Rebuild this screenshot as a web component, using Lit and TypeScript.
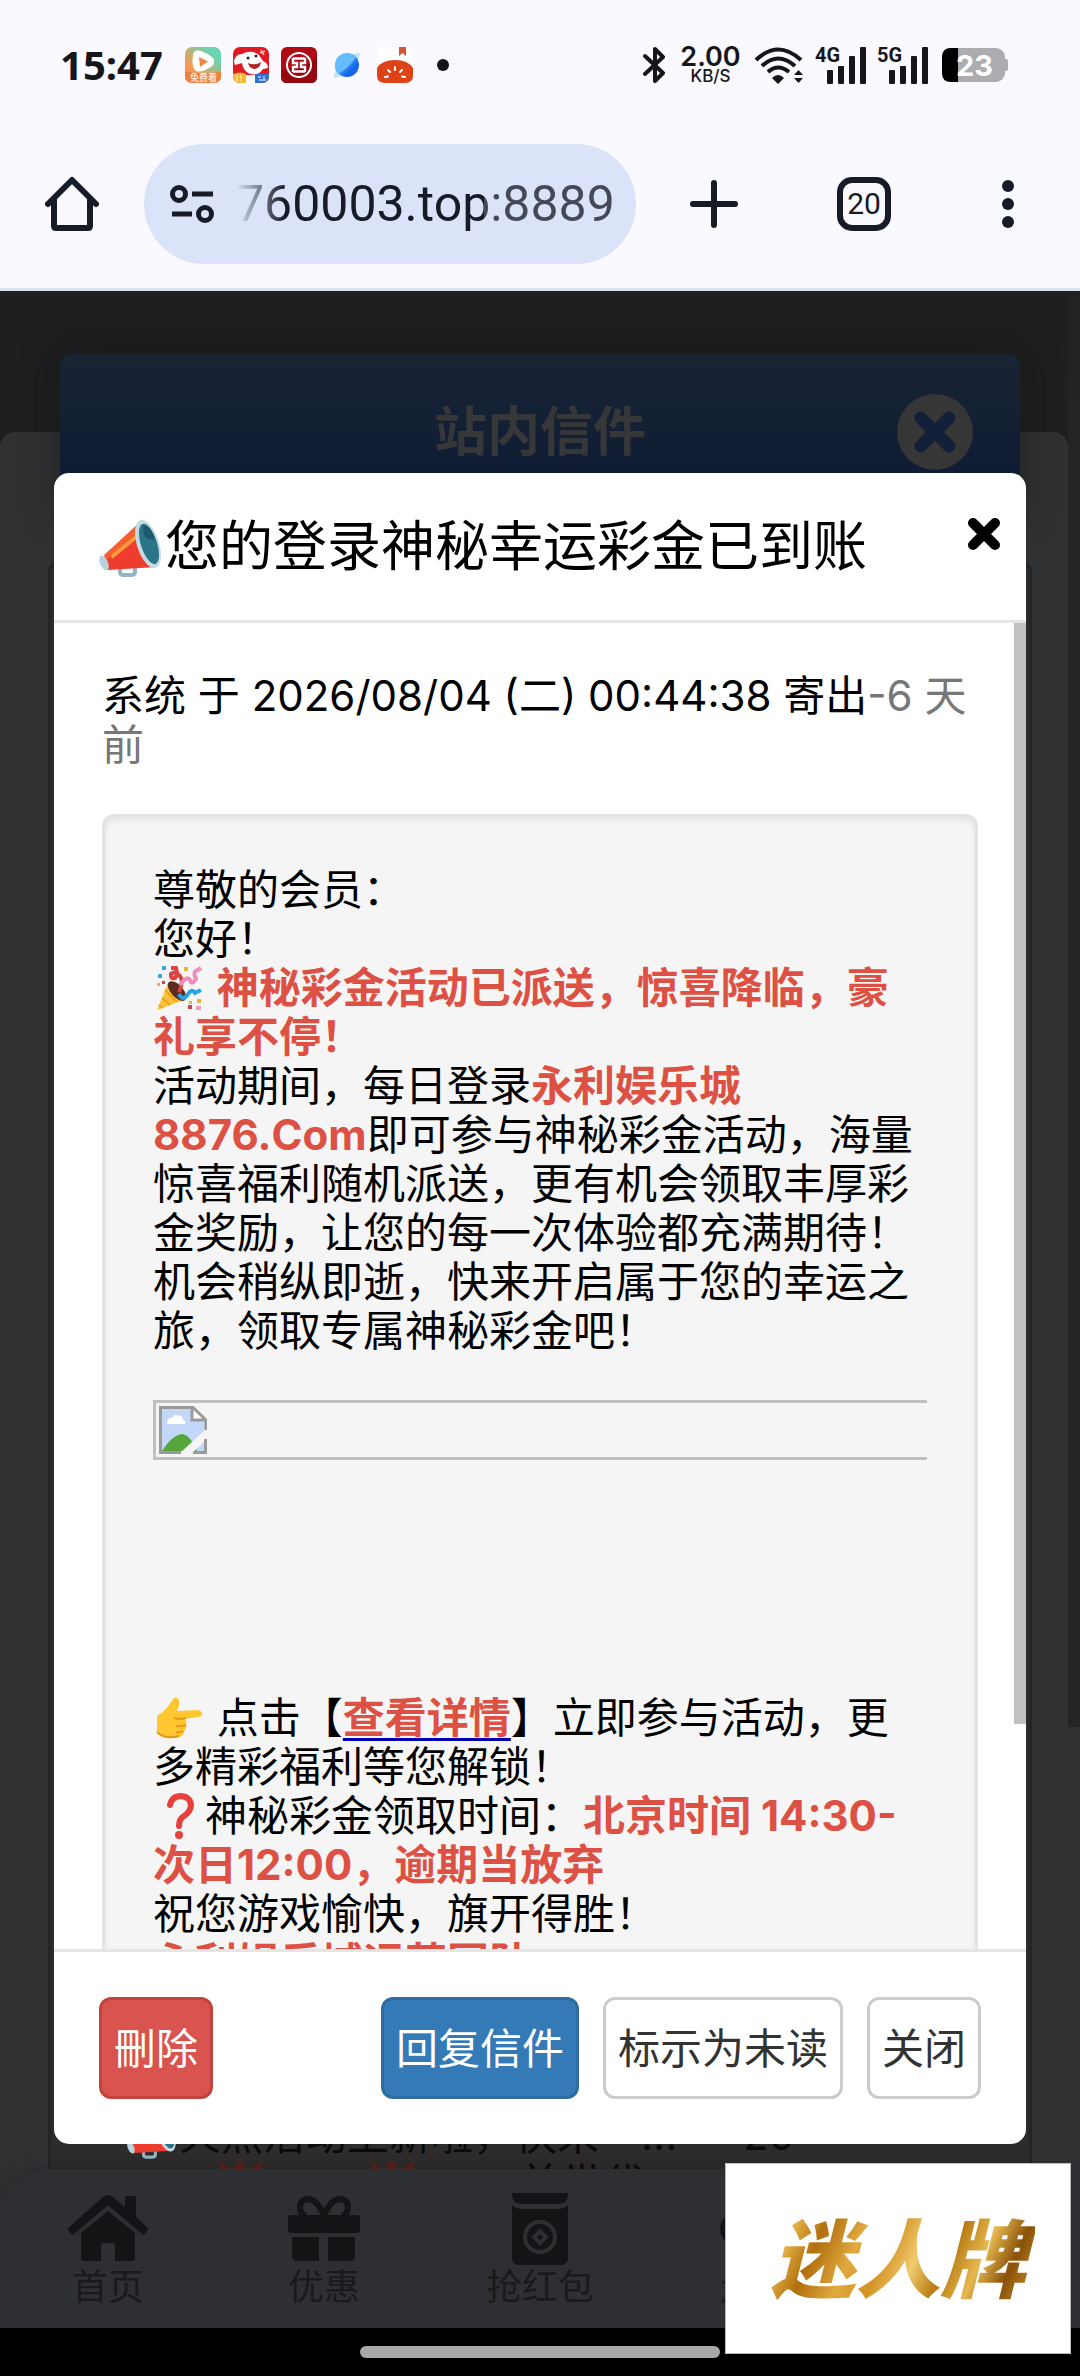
// import stuff
import { LitElement, html, css, svg } from 'lit';
import { customElement, property } from 'lit/decorators.js';

// the two strokes shared by every close icon
const cross = svg`<path d="M7 7 L29 29 M29 7 L7 29" fill="none" stroke="currentColor" stroke-width="10" stroke-linecap="round"/>`;

// emoji, drawn on a 52x48 box so they sit in a line of text
const horn = html`
  <svg class="emoji" viewBox="0 0 66 60" aria-hidden="true">
    <path d="M21 46 v9 q0 3 4 3 h7 q4 0 4-3 v-7" fill="none" stroke="#8fb5c6" stroke-width="4"/>
    <path d="M3 42 L40 6 L57 50 L9 53 Z" fill="#ee3d2f"/>
    <path d="M5 38 L40 6 L44 15 L7 43 Z" fill="#f4602f"/>
    <path d="M12 38 L38 17 L39 21 L13 42 Z" fill="#ff9a3d"/>
    <ellipse cx="5" cy="46" rx="4" ry="8" fill="#b9d3de" transform="rotate(-22 5 46)"/>
    <ellipse cx="49" cy="27" rx="11" ry="25" fill="#c6dae3" transform="rotate(-18 49 27)"/>
    <ellipse cx="50" cy="27" rx="8" ry="21" fill="#2a7488" transform="rotate(-18 50 27)"/>
    <path d="M44 9 Q51 6 56 22 Q49 24 45 18 Z" fill="#1d5a6d"/>
  </svg>`;

const party = html`
  <svg class="emoji" viewBox="0 0 52 48" aria-hidden="true">
    <path d="M4 46 L15 19 Q27 22 31 36 Z" fill="#fcc43a"/>
    <path d="M9 34 L17 41 M12 26 L24 38 M6 41 L10 44" stroke="#f2a31d" stroke-width="2"/>
    <ellipse cx="24" cy="27" rx="6" ry="12" fill="#5c2b20" transform="rotate(-42 24 27)"/>
    <path d="M26 28 Q31 17 27 12 Q22 6 18 10 Q17 15 22 14 Q25 10 23 4 L18 4" fill="none" stroke="#dc4340" stroke-width="4"/>
    <path d="M27 21 Q34 11 37 16 Q38 22 43 15 Q39 7 45 6 L48 4" fill="none" stroke="#ee8fbb" stroke-width="4"/>
    <path d="M26 30 Q30 38 35 30 Q39 24 42 29 L48 26" fill="none" stroke="#2aa3e0" stroke-width="4"/>
    <path d="M5 10 h4 v4 h-4z M9 2 h4 v4 h-4z" fill="#3ba7dd"/>
    <path d="M31 3 h4 v4 h-4z M4 19 h3 v3 h-3z M44 35 h4 v4 h-4z M36 37 h3 v3 h-3z" fill="#e8b33a"/>
    <path d="M35 41 h4 v4 h-4z M9 17 h3 v3 h-3z" fill="#c9454c"/>
    <path d="M43 42 h5 v4 h-5z" fill="#ee9cc2"/>
  </svg>`;

const pointer = html`
  <svg class="emoji" viewBox="0 0 52 48" aria-hidden="true">
    <path d="M4 20 Q14 14 20 3 Q23 -1 26 4 Q27 8 24 15 L45 14 Q50 15 49 19 Q48 21 45 21 L31 23 Q35 25 33 29 Q34 33 31 35 Q31 40 26 41 Q10 45 4 36 Z" fill="#fec62f" transform="translate(0 2)"/>
    <path d="M21 24 Q27 26 33 24 M23 32 Q28 33 33 31 M23 38 Q27 39 30 37 M4 38 Q12 46 26 42" fill="none" stroke="#e39a17" stroke-width="2"/>
  </svg>`;

const question = html`
  <svg class="emoji" viewBox="0 0 52 48" aria-hidden="true">
    <path d="M17 13 Q19 4 28 4 Q38 5 38 14 Q37 20 31 24 Q26 27 26 34" fill="none" stroke="#e8413b" stroke-width="6" stroke-linecap="round"/>
    <circle cx="26" cy="43" r="4" fill="#e8413b"/>
  </svg>`;

const burst = html`
  <svg class="emoji" viewBox="0 0 52 48" aria-hidden="true">
    <path d="M4 2 L17 12 L25 0 L32 12 L48 2 L42 20 H10 Z" fill="#5c211c"/>
  </svg>`;

@customElement('status-bar')
export class StatusBar extends LitElement {
  static get styles() {
    return css`
      :host {
        display: flex;
        align-items: center;
        justify-content: space-between;
        box-sizing: border-box;
        height: 120px;
        padding: 10px 72px 0 60px;
        color: #16161a;
        font-family: "Noto Sans", sans-serif;
      }
      .group {
        display: flex;
        align-items: center;
      }
      .left { gap: 12px; }
      .right { gap: 14px; }
      svg { display: block; }
      .time {
        margin-right: 10px;
        font-size: 40px;
        font-weight: 700;
        line-height: 48px;
      }
      .speed {
        display: flex;
        flex-direction: column;
        align-items: center;
        width: 59px;
        font: 600 27px/22px Inter, sans-serif;
      }
      .unit {
        font-size: 17px;
        font-weight: 500;
        line-height: 16px;
      }
      .net { font: 700 20px Roboto, sans-serif; }
      .level { font: 700 29px Inter, sans-serif; }
      .tiny { font: 700 9px "Noto Sans CJK SC", sans-serif; }
    `;
  }

  signal(net: string) {
    return html`
      <svg width="48" height="37" viewBox="0 0 48 37" fill="currentColor" overflow="visible">
        <text class="net" x="-3" y="15">${net}</text>
        <rect x="9" y="23" width="6" height="14" rx="1"/>
        <rect x="20" y="19" width="6" height="18" rx="1"/>
        <rect x="31" y="9" width="6" height="28" rx="1"/>
        <rect x="42" y="0" width="6" height="37" rx="1"/>
      </svg>`;
  }

  render() {
    return html`
      <div class="group left">
        <span class="time">15:47</span>
        <svg width="36" height="36" viewBox="0 0 36 36">
          <defs>
            <linearGradient id="v" x1="0" y1="1" x2="1" y2="0">
              <stop offset="0.3" stop-color="#f59a56"/><stop offset="0.8" stop-color="#67d5b2"/>
            </linearGradient>
          </defs>
          <rect width="36" height="36" rx="7" fill="url(#v)"/>
          <path d="M0 24 Q18 29 36 24 V29 Q36 36 29 36 H7 Q0 36 0 29 Z" fill="#f0803f"/>
          <path d="M8 8 Q9 2 16 4 Q27 8 29 13 Q30 18 24 21 Q16 26 11 24 Q6 20 8 8 Z" fill="#fff"/>
          <path d="M14 10 L23 14.500 L15 20 Z" fill="#ee8844"/>
          <text class="tiny" x="5" y="34" fill="#fde4d0">免费看</text>
        </svg>
        <svg width="36" height="36" viewBox="0 0 36 36">
          <rect width="36" height="36" rx="7" fill="#e01a22"/>
          <path d="M1 15 Q2 7 9 7 Q18 2 26 8 L30 14 Q35 16 35 21 L30 22 Q26 29 18 27 Q10 25 9 16 L2 18 Z" fill="#fff"/>
          <path d="M15 16 Q22 19 28 15 Q27 22 21 22 Q16 21 15 16 Z" fill="#b5262b"/>
          <circle cx="15" cy="11" r="1.500" fill="#222"/><circle cx="23" cy="9" r="1.500" fill="#222"/>
          <path d="M27 6 L32 4 M28 3 L31 8" stroke="#fbb" stroke-width="1.500"/>
          <path d="M0 27 Q8 24 13 27 V36 H7 Q0 36 0 29 Z" fill="#f8b72c"/>
          <path d="M13 28 h9 v8 h-9z" fill="#fff"/>
          <path d="M22 27 H36 V29 Q36 36 29 36 H22 Z" fill="#2f6fd6"/>
          <path d="M4 27 v8 M8 27 v8" stroke="#fdf0c0" stroke-width="1"/>
          <path d="M25 30 h3 M26 33 h7 M31 29 v3" stroke="#fff" stroke-width="1"/>
        </svg>
        <svg width="36" height="36" viewBox="0 0 36 36">
          <rect width="36" height="36" rx="6" fill="#b00a14"/>
          <path d="M0 24 L36 12 V30 Q36 36 30 36 H6 Q0 36 0 30 Z" fill="#95060e"/>
          <circle cx="18" cy="18" r="12" fill="none" stroke="#fff" stroke-width="2"/>
          <path d="M12 11.500 H24 M12 24.500 H24 M12 11 V16 H16 V20 H12 V25 M24 11 V16 H20 V20 H24 V25" fill="none" stroke="#fff" stroke-width="2.400"/>
        </svg>
        <svg width="36" height="36" viewBox="0 0 36 36">
          <defs>
            <linearGradient id="p" x1="0" y1="0" x2="1" y2="1">
              <stop offset="0.3" stop-color="#5cbcff"/><stop offset="0.7" stop-color="#1565e8"/>
            </linearGradient>
          </defs>
          <path d="M5 31 Q4 26 12 17 Q24 5 30 6 Q33 8 24 20 Q10 32 5 31 Z" fill="#bfe4fb"/>
          <circle cx="18" cy="18" r="12" fill="url(#p)"/>
          <path d="M6 20 Q7 7 19 6 Q26 7 27 10 Q20 21 9 27 Q6 24 6 20 Z" fill="#63bcfb"/>
        </svg>
        <svg width="36" height="36" viewBox="0 0 36 36">
          <rect width="36" height="36" rx="7" fill="#fff"/>
          <path d="M22 0 h7 v9 l-3.500-3 l-3.500 3z" fill="#d2553a"/>
          <path d="M0 21 Q5 13 18 13 Q31 13 36 21 V29 Q36 36 28 36 H8 Q0 36 0 29 Z" fill="#de4318"/>
          <path d="M18 20 v3 M11 23 l2 2 M25 23 l-2 2 M8 30 l3-0.500 M28 30 l-3-0.500" stroke="#fff" stroke-width="2" stroke-linecap="round"/>
        </svg>
        <svg width="36" height="36" viewBox="0 0 36 36"><circle cx="18" cy="18" r="6" fill="#16161a"/></svg>
      </div>
      <div class="group right">
        <svg width="24" height="38" viewBox="0 0 24 38" fill="none" stroke="currentColor" stroke-width="4" stroke-linejoin="round" stroke-linecap="round">
          <path d="M2 10 L20 27 L12 35 V3 L20 11 L2 28"/>
        </svg>
        <div class="speed">2.00<span class="unit">KB/S</span></div>
        <svg width="50" height="37" viewBox="0 0 50 37" fill="none" stroke="currentColor" stroke-width="4">
          <path d="M2 13 Q24 -8 47 13 M8 19 Q24 4 41 19 M14 25 Q24 16 35 25"/>
          <path d="M18 31 Q24 25 30 31 L24 37 Z M40 28 l4.500-5 l4.500 5z M40 31 l4.500 5 l4.500-5z" fill="currentColor" stroke="none"/>
        </svg>
        ${this.signal('4G')}
        ${this.signal('5G')}
        <svg width="66" height="36" viewBox="0 0 66 36">
          <rect x="0" y="1" width="63" height="34" rx="9" fill="#adadb1"/>
          <rect x="61" y="12" width="5" height="12" rx="2" fill="#adadb1"/>
          <path d="M9 1 H16 V35 H9 Q0 35 0 26 V10 Q0 1 9 1 Z" fill="#000"/>
          <text class="level" x="14" y="29" fill="#fff">23</text>
        </svg>
      </div>
    `;
  }
}

@customElement('browser-bar')
export class BrowserBar extends LitElement {
  static get styles() {
    return css`
      :host {
        display: flex;
        align-items: center;
        padding: 24px 0;
        border-bottom: 3px solid #dde3ee;
        color: #171b28;
      }
      button {
        display: flex;
        align-items: center;
        justify-content: center;
        width: 144px;
        padding: 0;
        border: 0;
        background: none;
        color: inherit;
      }
      .add { width: 156px; }
      svg { display: block; }
      .address {
        display: flex;
        flex: 1;
        align-items: center;
        box-sizing: border-box;
        min-width: 0;
        height: 120px;
        padding: 0 24px;
        border-radius: 60px;
        background: #dbe3f8;
      }
      .address button {
        flex: none;
        width: 48px;
        margin-right: 20px;
      }
      /* host is dark, port is lighter, and the start fades out */
      input {
        flex: 1;
        min-width: 0;
        padding: 0;
        border: 0;
        outline: 0;
        background: linear-gradient(90deg, #171b28 66%, #454857 66%);
        background-clip: text;
        color: transparent;
        font: 400 50px/64px Roboto, sans-serif;
        text-align: right;
        mask-image: linear-gradient(90deg, transparent, #000 48px);
      }
      .tabs {
        display: flex;
        align-items: center;
        justify-content: center;
        box-sizing: border-box;
        width: 54px;
        height: 54px;
        border: 6px solid currentColor;
        border-radius: 15px;
        font: 400 30px/30px Roboto, sans-serif;
      }
    `;
  }

  render() {
    return html`
      <button aria-label="主页">
        <svg width="54" height="56" viewBox="0 0 54 56" fill="none" stroke="currentColor" stroke-width="6" stroke-linejoin="round" stroke-linecap="round">
          <path d="M3 28 L27 4 L51 28 M9 24 V50 Q9 52 11 52 H43 Q45 52 45 50 V24"/>
        </svg>
      </button>
      <div class="address">
        <button aria-label="网站信息">
          <svg width="48" height="40" viewBox="0 0 48 40" fill="none" stroke="currentColor" stroke-width="5">
            <circle cx="11" cy="10" r="6.500"/>
            <circle cx="37" cy="30" r="6.500"/>
            <path d="M24 10 H45 M4 30 H24"/>
          </svg>
        </button>
        <input aria-label="网址" value="760003.top:8889" readonly>
      </div>
      <button class="add" aria-label="新标签页">
        <svg width="48" height="48" viewBox="0 0 48 48" fill="none" stroke="currentColor" stroke-width="6" stroke-linecap="round">
          <path d="M24 3 V45 M3 24 H45"/>
        </svg>
      </button>
      <button aria-label="标签页"><span class="tabs">20</span></button>
      <button aria-label="更多">
        <svg width="12" height="48" viewBox="0 0 12 48" fill="currentColor">
          <circle cx="6" cy="6" r="6"/><circle cx="6" cy="24" r="6"/><circle cx="6" cy="42" r="6"/>
        </svg>
      </button>
    `;
  }
}

@customElement('mail-dialog')
export class MailDialog extends LitElement {
  @property({ type: String }) heading = '';

  static get styles() {
    return css`
      :host {
        display: flex;
        flex-direction: column;
        overflow: hidden;
        border-radius: 15px;
        background: #fff;
        color: #000;
        font-family: Inter, "Noto Sans CJK SC", sans-serif;
        font-size: 42px;
        line-height: 49px;
      }
      header {
        display: flex;
        align-items: center;
        gap: 24px;
        box-sizing: border-box;
        height: 150px;
        padding: 0 24px 0 45px;
        border-bottom: 3px solid #e5e5e5;
      }
      h1 {
        flex: 1;
        margin: 0;
        font-size: 54px;
        font-weight: 400;
        line-height: 60px;
      }
      .emoji {
        width: 52px;
        height: 48px;
        vertical-align: -9px;
      }
      h1 .emoji {
        width: 66px;
        height: 60px;
        vertical-align: -11px;
      }
      .close {
        align-self: flex-start;
        margin-top: 43px;
        padding: 0;
        border: 0;
        background: none;
        color: #000;
      }
      .close svg { display: block; }
      .body {
        display: flex;
        flex: 1;
        min-height: 0;
      }
      .scroll {
        flex: 1;
        min-width: 0;
        overflow: hidden;
        padding: 48px 36px 0 48px;
      }
      .track {
        flex: none;
        width: 12px;
      }
      .thumb {
        height: 83%;
        background: #c1c1c1;
      }
      p { margin: 0; }
      .ago { color: #777; }
      .well {
        margin-top: 45px;
        padding: 48px;
        border: 3px solid #e3e3e3;
        border-radius: 12px;
        background: #f5f5f5;
        box-shadow: inset 0 3px 6px rgba(0, 0, 0, 0.08);
      }
      strong { color: #dd5144; }
      a {
        color: #0000b0;
        text-decoration: underline;
        text-decoration-thickness: 3px;
        text-underline-offset: 5px;
        text-decoration-skip-ink: none;
      }
      .picture {
        box-sizing: border-box;
        height: 60px;
        margin: 45px 0 233px;
        padding: 3px;
        border: solid #c0c0c0;
        border-width: 3px 0 3px 3px;
      }
      .picture svg { display: block; }
      footer {
        display: flex;
        gap: 24px;
        padding: 45px;
        border-top: 3px solid #e5e5e5;
      }
      .btn {
        box-sizing: border-box;
        height: 102px;
        padding: 0 12px;
        border: 3px solid #ccc;
        border-radius: 12px;
        background: #fff;
        color: #333;
        font: inherit;
      }
      .danger {
        margin-right: auto;
        border-color: #c2443f;
        background: #d9534f;
        color: #fff;
      }
      .primary {
        border-color: #2f6c9f;
        background: #337ab7;
        color: #fff;
      }
    `;
  }

  render() {
    return html`
      <header>
        <h1>${horn}${this.heading}</h1>
        <button class="close" aria-label="关闭">
          <svg width="36" height="36" viewBox="0 0 36 36">${cross}</svg>
        </button>
      </header>
      <div class="body">
        <div class="scroll">
          <p>系统 于 2026/08/04 (二) 00:44:38 寄出<span class="ago">-6 天前</span></p>
          <div class="well">
            <p>尊敬的会员：</p>
            <p>您好！</p>
            <p>${party} <strong>神秘彩金活动已派送，惊喜降临，豪礼享不停！</strong></p>
            <p>活动期间，每日登录<strong>永利娱乐城 8876.Com</strong>即可参与神秘彩金活动，海量惊喜福利随机派送，更有机会领取丰厚彩金奖励，让您的每一次体验都充满期待！</p>
            <p>机会稍纵即逝，快来开启属于您的幸运之旅，领取专属神秘彩金吧！</p>
            <div class="picture">
              <svg width="48" height="48" viewBox="0 0 48 48">
                <path d="M2 2 H34 L46 14 V46 H2 Z" fill="#c3d7f8"/>
                <path d="M8 17 Q8 12 13 12 Q15 7 20 10 Q24 9 24 14 Q28 15 26 18 H9 Z" fill="#fff"/>
                <path d="M3 45 Q14 28 24 28 Q32 30 38 45 Z" fill="#55a73c"/>
                <path d="M20 48 L48 22 V33 L32 48 Z" fill="#f5f5f5"/>
                <path d="M33 2 V14 H46 Z" fill="#fff"/>
                <path d="M47 24 V14 L34 1.500 H1.500 V46.500 H22 M33 2 V14 H46 M34 46.500 H46.500 V33" fill="none" stroke="#9a9a9a" stroke-width="3"/>
              </svg>
            </div>
            <p>${pointer} 点击【<a href="#"><strong>查看详情</strong></a>】立即参与活动，更多精彩福利等您解锁！</p>
            <p>${question}神秘彩金领取时间：<strong>北京时间 14:30-次日12:00，逾期当放弃</strong></p>
            <p>祝您游戏愉快，旗开得胜！</p>
            <p><strong>永利娱乐城运营团队</strong></p>
          </div>
        </div>
        <div class="track"><div class="thumb"></div></div>
      </div>
      <footer>
        <button class="btn danger">刪除</button>
        <button class="btn primary">回复信件</button>
        <button class="btn">标示为未读</button>
        <button class="btn">关闭</button>
      </footer>
    `;
  }
}

@customElement('app-root')
export class AppRoot extends LitElement {
  static get styles() {
    return css`
      :host {
        position: relative;
        display: flex;
        flex-direction: column;
        height: 100vh;
        background: #f9f9ff;
        font-family: Inter, "Noto Sans CJK SC", sans-serif;
      }
      .page {
        position: relative;
        display: flex;
        flex: 1;
        flex-direction: column;
        min-height: 0;
        overflow: hidden;
        background: #1e1f20;
      }
      .stage {
        display: flex;
        flex: 1;
        min-height: 0;
        padding-top: 141px;
      }
      .sheet {
        flex: 1;
        margin-bottom: -48px;
        border-radius: 15px 15px 0 0;
        background: #303133;
      }
      .rail {
        flex: none;
        width: 12px;
        margin-top: -141px;
        margin-bottom: -48px;
        background: linear-gradient(#202222, #242626 160px, #242626 1436px, #303133 1436px);
      }
      /* the mail list under the open letter */
      .inbox {
        position: absolute;
        inset: 63px 48px 159px;
        display: flex;
        flex-direction: column;
      }
      .inbox-head {
        display: grid;
        grid-template-columns: 1fr auto 1fr;
        align-items: center;
        height: 156px;
        margin: 0 12px;
        padding: 0 47px;
        border-radius: 12px 12px 0 0;
        background: linear-gradient(#182433, #101c34 120px);
        box-shadow: 0 0 36px rgba(20, 18, 16, 0.5);
        color: #363739;
      }
      .inbox-head h2 {
        grid-column: 2;
        margin: 0;
        font-size: 53px;
        font-weight: 700;
        line-height: 60px;
      }
      .inbox-head button {
        justify-self: end;
        width: 76px;
        height: 76px;
        padding: 15px;
        border: 0;
        border-radius: 50%;
        background: #363636;
        color: #13203a;
      }
      .inbox-head svg { display: block; }
      .inbox-body {
        display: flex;
        flex: 1;
        flex-direction: column;
        justify-content: flex-end;
        margin-top: 50px;
        border: 3px solid #242424;
        border-bottom: 0;
        border-radius: 12px 12px 0 0;
        background: #2d2c2b;
      }
      .list {
        height: 59px;
        overflow: hidden;
        padding: 0 76px;
        color: #0a0a0a;
        font-size: 42px;
        line-height: 49px;
        white-space: nowrap;
      }
      .row {
        display: flex;
        gap: 42px;
      }
      .row.second {
        gap: 100px;
        padding: 0 88px;
      }
      .emoji {
        width: 52px;
        height: 48px;
        vertical-align: -9px;
      }
      nav {
        position: relative;
        display: flex;
        height: 159px;
        border-radius: 48px 0 0 0;
        background: #2e2f33;
        box-shadow: 0 0 15px rgba(0, 0, 0, 0.2);
      }
      nav a {
        display: flex;
        flex: 1;
        flex-direction: column;
        align-items: center;
        padding-top: 21px;
        color: #191a1c;
        font-size: 36px;
        line-height: 42px;
        text-decoration: none;
      }
      nav svg {
        width: 84px;
        height: 76px;
        fill: #131416;
      }
      mail-dialog {
        position: absolute;
        inset: 182px 54px 184px;
      }
      .gesture {
        display: flex;
        align-items: center;
        justify-content: center;
        height: 48px;
        background: #000;
      }
      .handle {
        width: calc(100% / 3);
        height: 12px;
        border-radius: 6px;
        background: #a8a8a8;
      }
      .ad {
        position: absolute;
        right: 9px;
        bottom: 22px;
        display: flex;
        align-items: center;
        justify-content: center;
        box-sizing: border-box;
        width: 346px;
        height: 191px;
        padding-bottom: 9px;
        border: 1px solid #bbb;
        background: #fff;
        text-decoration: none;
      }
      .brand {
        padding: 0 9px;
        background: linear-gradient(115deg, #c08318, #e8b64c 14%, #b06f0c 24%, #e0a93f 36%, #d39324 46%, #f0cb70 56%, #b87a12 66%, #e6b850 76%, #8a5209 86%, #d99d2c);
        background-clip: text;
        color: transparent;
        font: italic 900 85px/120px "Noto Sans CJK SC", sans-serif;
      }
    `;
  }

  render() {
    return html`
      <status-bar></status-bar>
      <browser-bar></browser-bar>
      <div class="page" lang="zh-CN">
        <div class="stage">
          <div class="sheet"></div>
          <div class="rail"></div>
        </div>
        <section class="inbox">
          <div class="inbox-head">
            <h2>站内信件</h2>
            <button aria-label="关闭">
              <svg width="46" height="46" viewBox="0 0 36 36">${cross}</svg>
            </button>
          </div>
          <div class="inbox-body">
            <div class="list">
              <div class="row"><span>${horn}火热活动上新啦，快来</span><span>...</span><span>&nbsp; 20</span></div>
              <div class="row second">${burst}${burst}<span>美世代</span></div>
            </div>
          </div>
        </section>
        <nav>
          <a href="#">
            <svg viewBox="0 0 84 76">
              <path d="M2 38 L37 7 Q42 3 47 7 L59 17 V8 Q59 6 61 6 H68 Q70 6 70 8 V27 L82 38 Q83 39 82 40 L79 44 Q78 45 76 44 L44 17 Q42 15 40 17 L8 44 Q6 45 5 44 L2 40 Q1 39 2 38 Z"/>
              <path d="M15 43 L42 21 L69 43 V68 Q69 71 66 71 H49 V55 Q49 53 47 53 H37 Q35 53 35 55 V71 H18 Q15 71 15 68 Z"/>
            </svg>
            首页
          </a>
          <a href="#">
            <svg viewBox="0 0 84 76">
              <path d="M9 25 H75 Q78 25 78 28 V40 Q78 43 75 43 H9 Q6 43 6 40 V28 Q6 25 9 25 Z M10 47 H37 V71 H15 Q10 71 10 66 Z M46 47 H73 V66 Q73 71 68 71 H46 Z"/>
              <path d="M42 26 Q36 10 27 9 Q18 9 18 18 Q19 25 24 26 M42 26 Q48 10 57 9 Q66 9 66 18 Q65 25 60 26" fill="none" stroke="#131416" stroke-width="6"/>
            </svg>
            优惠
          </a>
          <a href="#">
            <svg viewBox="0 0 84 76">
              <path d="M14 3 H70 Q70 14 60 14 H24 Q14 14 14 3 Z M14 15 Q18 19 24 19 H60 Q66 19 70 15 V68 Q70 75 63 75 H21 Q14 75 14 68 Z"/>
              <circle cx="42" cy="47" r="15" fill="none" stroke="#2e2f33" stroke-width="4"/>
              <path d="M42 41 L48 47 L42 53 L36 47 Z" fill="none" stroke="#2e2f33" stroke-width="4"/>
            </svg>
            抢红包
          </a>
          <a href="#">
            <svg viewBox="0 0 84 76"><ellipse cx="42" cy="39" rx="36" ry="24"/></svg>
            走势
          </a>
          <a href="#">
            <svg viewBox="0 0 84 76"><circle cx="42" cy="24" r="18"/><path d="M12 72 Q14 44 42 44 Q70 44 72 72 Z"/></svg>
            我的
          </a>
        </nav>
        <mail-dialog role="dialog" heading="您的登录神秘幸运彩金已到账"></mail-dialog>
      </div>
      <div class="gesture"><div class="handle"></div></div>
      <a class="ad" href="#"><span class="brand">迷人牌</span></a>
    `;
  }
}
